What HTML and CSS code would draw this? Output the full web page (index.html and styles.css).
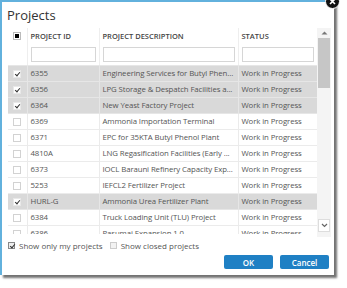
FILE: index.html
```html
<html>
  <head>
    <title>Projects</title>
    <link rel="stylesheet" href="styles.css">
  </head>
  <body>
    <div class="dialog">
      <span class="close"><svg width="13" height="13" viewBox="0 0 13 13"><path d="M4 4 L9 9 M9 4 L4 9" stroke="#fff" stroke-width="1.6"/></svg></span>
      <h1 class="title">Projects</h1>

      <div class="grid">
        <div class="grid-main">
          <table class="grid-table">
            <colgroup><col class="c-check"><col class="c-id"><col class="c-desc"><col class="c-status"></colgroup>
            <tr class="head-row">
              <th class="check-cell"><span class="cb cb-partial"></span></th>
              <th>Project ID</th>
              <th>Project Description</th>
              <th>Status</th>
            </tr>
            <tr class="filter-row">
              <td></td>
              <td><input type="text"></td>
              <td><input type="text"></td>
              <td><input type="text"></td>
            </tr>
          </table>

          <div class="grid-body">
            <table class="grid-table">
              <colgroup><col class="c-check"><col class="c-id"><col class="c-desc"><col class="c-status"></colgroup>
              <tr class="selected"><td class="check-cell"><span class="cb cb-on"></span></td><td>6355</td><td>Engineering Services for Butyl Phen...</td><td>Work in Progress</td></tr>
              <tr class="selected"><td class="check-cell"><span class="cb cb-on"></span></td><td>6356</td><td>LPG Storage &amp; Despatch Facilities a...</td><td>Work in Progress</td></tr>
              <tr class="selected"><td class="check-cell"><span class="cb cb-on"></span></td><td>6364</td><td>New Yeast Factory Project</td><td>Work in Progress</td></tr>
              <tr><td class="check-cell"><span class="cb"></span></td><td>6369</td><td>Ammonia Importation Terminal</td><td>Work in Progress</td></tr>
              <tr><td class="check-cell"><span class="cb"></span></td><td>6371</td><td>EPC for 35KTA Butyl Phenol Plant</td><td>Work in Progress</td></tr>
              <tr><td class="check-cell"><span class="cb"></span></td><td>4810A</td><td>LNG Regasification Facilities (Early ...</td><td>Work in Progress</td></tr>
              <tr><td class="check-cell"><span class="cb"></span></td><td>6373</td><td>IOCL Barauni Refinery Capacity Exp...</td><td>Work in Progress</td></tr>
              <tr><td class="check-cell"><span class="cb"></span></td><td>5253</td><td>IEFCL2 Fertilizer Project</td><td>Work in Progress</td></tr>
              <tr class="selected"><td class="check-cell"><span class="cb cb-on"></span></td><td>HURL-G</td><td>Ammonia Urea Fertilizer Plant</td><td>Work in Progress</td></tr>
              <tr><td class="check-cell"><span class="cb"></span></td><td>6384</td><td>Truck Loading Unit (TLU) Project</td><td>Work in Progress</td></tr>
              <tr><td class="check-cell"><span class="cb"></span></td><td>6386</td><td>Pasumai Expansion 1.0</td><td>Work in Progress</td></tr>
            </table>
          </div>
        </div>

        <div class="scrollbar">
          <div class="sb-up"><svg width="7" height="4" viewBox="0 0 7 4"><path d="M0.5 3.5 L3.5 0.5 L6.5 3.5 Z" fill="#777"/></svg></div>
          <div class="sb-thumb"></div>
          <div class="sb-track"></div>
          <div class="sb-down"><svg width="7" height="5" viewBox="0 0 7 5"><path d="M1 1 L3.5 3.5 L6 1" fill="none" stroke="#666" stroke-width="1.2"/></svg></div>
        </div>
      </div>

      <div class="options">
        <label class="option"><span class="cb cb-dark"></span>Show only my projects</label>
        <label class="option"><span class="cb cb-light"></span>Show closed projects</label>
      </div>

      <div class="actions">
        <button class="btn">OK</button>
        <button class="btn">Cancel</button>
      </div>
    </div>
  </body>
</html>
```

FILE: styles.css
```css
body {
  margin: 0;
  background: #fff;
  font-family: "Open Sans", "Liberation Sans", sans-serif;
  color: #555;
}
.dialog {
  position: relative;
  box-sizing: border-box;
  width: 334px;
  height: 275px;
  padding: 0 3px 0 6px;
  background: #fff;
  border-top: 2px solid #62b1dd;
  border-left: 2px solid #62b1dd;
  box-shadow: 3px 3px 2px rgba(0, 0, 0, 0.55);
}
.close {
  position: absolute;
  top: -8px;
  left: 323px;
  width: 13px;
  height: 13px;
  border-radius: 50%;
  background: #111;
  border: 1px solid #fff;
}
.close svg {
  display: block;
}
.title {
  margin: 0 0 0 -1px;
  height: 26px;
  font-size: 13px;
  font-weight: 400;
  line-height: 26px;
  color: #333;
}

/* grid */
.grid {
  display: flex;
  height: 210px;
}
.grid-main {
  width: 309px;
}
.grid-table {
  width: 309px;
  table-layout: fixed;
  border-collapse: collapse;
}
.c-check { width: 19px; }
.c-id { width: 72px; }
.c-desc { width: 139px; }
.c-status { width: 79px; }
.grid-table th,
.grid-table td {
  padding: 0 3px;
  text-align: left;
  white-space: nowrap;
  overflow: hidden;
}
.head-row th {
  height: 16px;
  font-size: 7.5px;
  font-weight: 600;
  text-transform: uppercase;
  color: #444;
  border-left: 1px solid #eee;
}
.head-row th:first-child {
  border-left: 0;
}
.filter-row td {
  height: 21px;
  padding: 0 3px;
  vertical-align: middle;
  border-left: 1px solid #eee;
}
.filter-row td:first-child {
  border-left: 0;
}
.filter-row input {
  display: block;
  box-sizing: border-box;
  width: 100%;
  height: 15px;
  margin: 0;
  border: 1px solid #d6d6d6;
  background: #fff;
  outline: none;
}
.grid-body {
  height: 169px;
  overflow: hidden;
}
.grid-body td {
  height: 16px;
  font-size: 7.8px;
  letter-spacing: -0.1px;
  line-height: 15px;
  color: #555;
  border: 1px solid #ebebeb;
  border-right: 0;
}
.grid-body td:first-child {
  border-left: 0;
}
.grid-body tr.selected td {
  background: #d9d9d9;
  border-color: #e6e6e6;
}
.check-cell {
  text-align: center !important;
  padding: 0 !important;
}

/* checkboxes */
.cb {
  display: inline-block;
  box-sizing: border-box;
  width: 8px;
  height: 8px;
  border: 1px solid #d2d2d2;
  background: #fff;
  vertical-align: middle;
  position: relative;
}
.cb-partial {
  border-color: #bbb;
}
.cb-partial::after {
  content: "";
  position: absolute;
  left: 1px;
  top: 1px;
  width: 4px;
  height: 4px;
  background: #000;
}
.cb-on::after,
.cb-dark::after {
  content: "";
  position: absolute;
  left: 2px;
  top: 0;
  width: 2px;
  height: 4px;
  border: solid #333;
  border-width: 0 1px 1px 0;
  transform: rotate(40deg);
}
.cb-on {
  border-color: #e8e8e8;
}
.cb-dark {
  border-color: #888;
  background: #eee;
}
.cb-light {
  border-color: #ccc;
  background: #f2f2f2;
}

/* scrollbar */
.scrollbar {
  display: flex;
  flex-direction: column;
  width: 14px;
  height: 209px;
  background: #f4f4f4;
}
.sb-up {
  height: 10px;
  display: flex;
  align-items: center;
  justify-content: center;
}
.sb-thumb {
  height: 50px;
  margin: 0 1px;
  background: #c6c6c6;
}
.sb-track {
  flex: 1;
}
.sb-down {
  height: 11px;
  margin: 0 1px 5px;
  border: 1px solid #ddd;
  background: #fff;
  display: flex;
  align-items: center;
  justify-content: center;
}

/* footer */
.options {
  display: flex;
  align-items: center;
  gap: 7px;
  height: 15px;
  margin-top: 0;
  font-size: 8px;
  color: #555;
}
.option {
  display: flex;
  align-items: center;
  gap: 4px;
}
.options .cb {
  width: 7px;
  height: 7px;
}
.actions {
  display: flex;
  justify-content: flex-end;
  gap: 7px;
  margin: 2px 2px 0 0;
}
.btn {
  width: 49px;
  height: 14px;
  padding: 0;
  border: 0;
  border-radius: 2px;
  background: #1f80c4;
  color: #fff;
  font-family: "Open Sans", "Liberation Sans", sans-serif;
  font-size: 8px;
  font-weight: 600;
}
```
